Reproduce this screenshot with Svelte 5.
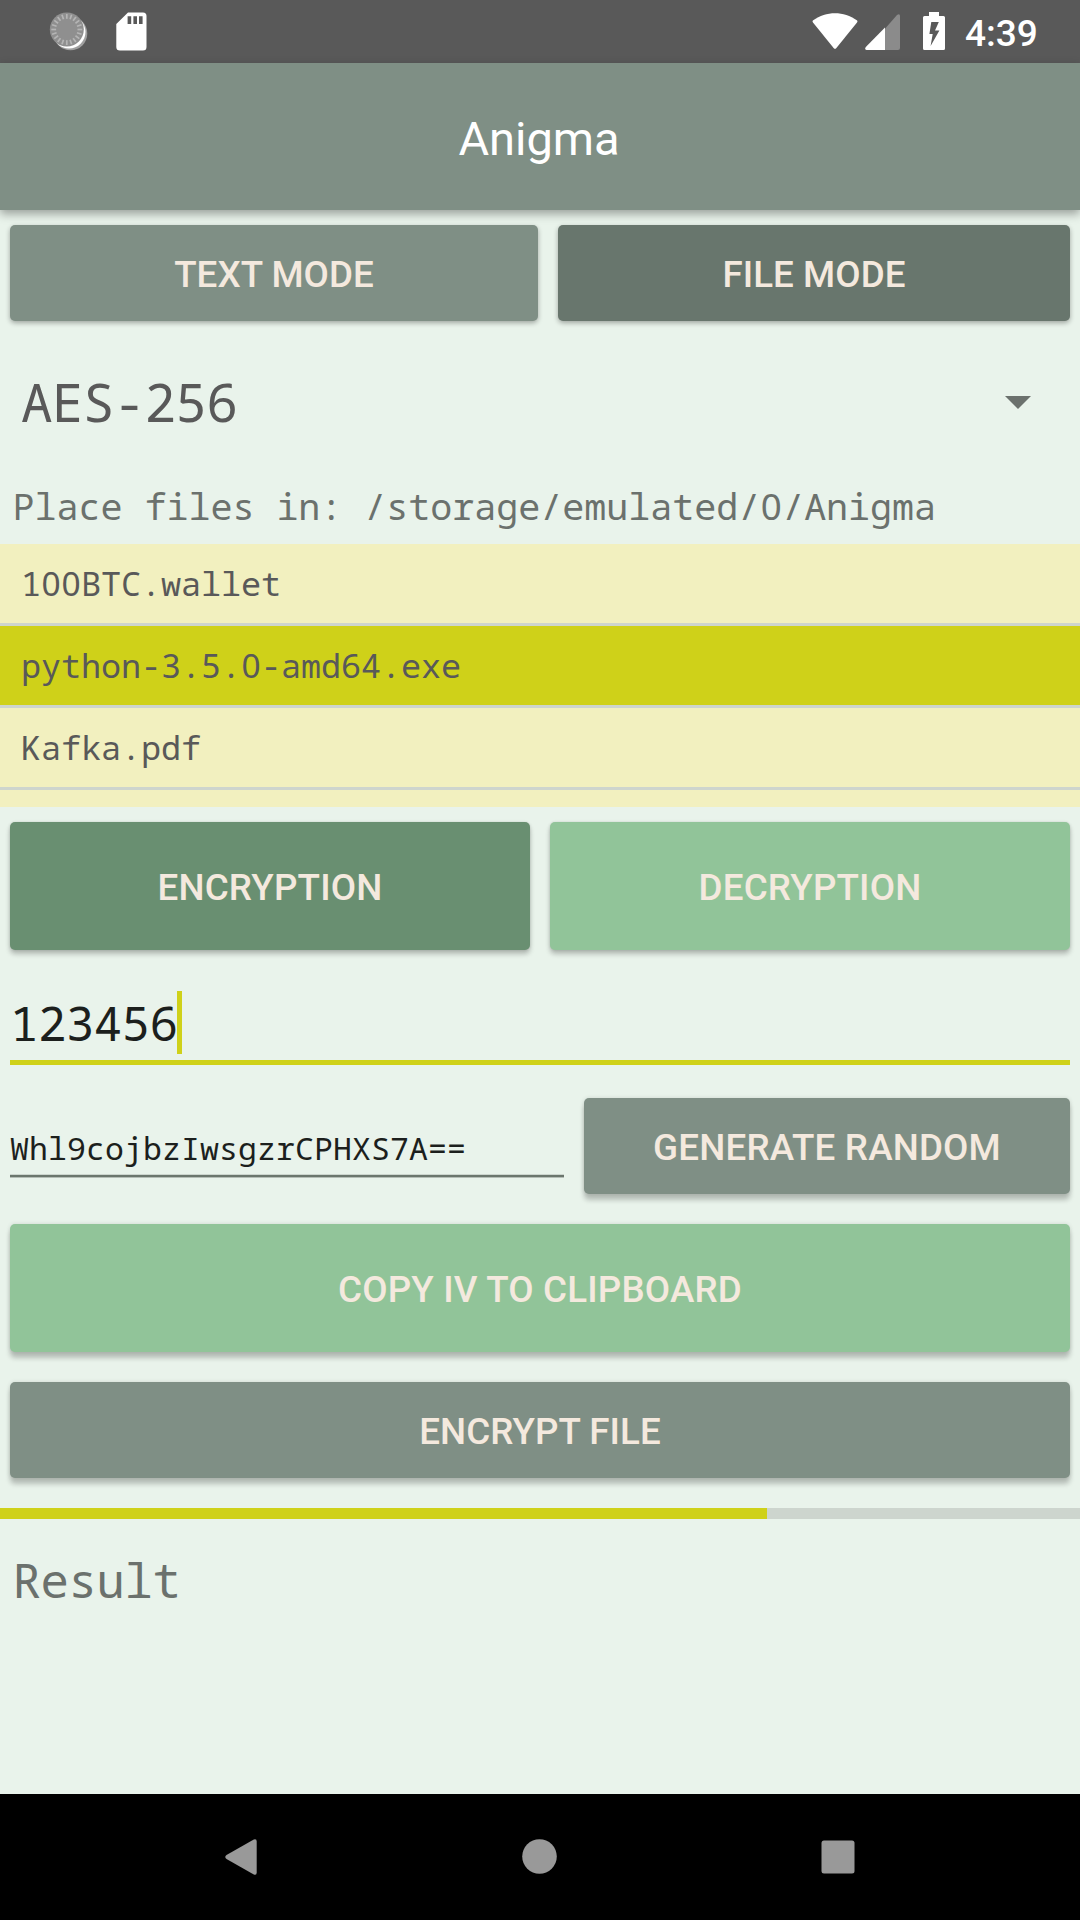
<script>
  const files = ['100BTC.wallet', 'python-3.5.0-amd64.exe', 'Kafka.pdf'];
  let selected = $state(1);
  const progress = 71;
  const ticks = Array.from({ length: 20 }, (_, i) => i * 18);
</script>

<!-- Monospaced text whose zeros are drawn without a slash -->
{#snippet plainZero(text)}{#each text.split('0') as part, i}{#if i > 0}<span class="zero">0</span>{/if}{part}{/each}{/snippet}

<div class="screen">
  <div class="status">
    <svg class="sync" width="40" height="40" viewBox="0 0 40 40">
      <circle cx="21.500" cy="21.500" r="16.800" fill="#a0a0a0" />
      <circle cx="20" cy="20" r="16.500" fill="#fff" />
      <circle cx="17.800" cy="17.500" r="17" fill="#8f8f8f" />
      {#each ticks as angle}
        <path d="M17.800 2V6.800" stroke="#b5b5b5" stroke-width="1.700" transform="rotate({angle} 17.800 17.500)" />
      {/each}
    </svg>
    <svg class="sd" width="31" height="39" viewBox="0 0 31 39">
      <path fill="#fff" fill-rule="evenodd" d="M12 .5H27Q30.5.5 30.5 4V35Q30.5 38.5 27 38.5H4Q.3 38.5.3 35V12Z M11.6 4.2V12H15.2V4.2Z M17.4 4.2V12H21V4.2Z M23 4.2V12H26.6V4.2Z" />
    </svg>
    <svg class="wifi" width="46" height="37" viewBox="0 0 46 37">
      <path fill="#fff" d="M1.2 7.2C14-2.2 32-2.2 44.8 7.2Q46 8.3 45 9.6L24.4 35Q23 36.7 21.6 35L1 9.6Q0 8.3 1.2 7.2Z" />
    </svg>
    <svg class="cell" width="35" height="36" viewBox="0 0 35 36">
      <path fill="#8b8b8b" d="M20 14.8L32 1Q35-.8 35 2V34Q35 36 33 36H20Z" />
      <path fill="#fff" d="M20 13.5V36H1.5Q-.8 35.500.8 33Z" />
    </svg>
    <svg class="battery" width="22" height="38" viewBox="0 0 22 38">
      <path fill="#fff" fill-rule="evenodd" d="M6 0H16V4H20.500Q22 4 22 5.500V36.500Q22 38 20.500 38H1.500Q0 38 0 36.500V5.500Q0 4 1.500 4H6Z M8.300 10L6.400 22H9.700L7.600 34L16.400 18.500H12L15.800 10Z" />
    </svg>
    <span class="clock">4:39</span>
  </div>

  <header>Anigma</header>

  <main>
    <div class="row modes">
      <button class="sage wide">Text mode</button>
      <button class="dark">File mode</button>
    </div>

    <div class="spinner mono">
      <span>AES-256</span>
      <svg width="26" height="13" viewBox="0 0 26 13"><path d="M0 0H26L13 13Z" fill="#6b716d" /></svg>
    </div>

    <p class="hint mono">{@render plainZero('Place files in: /storage/emulated/0/Anigma')}</p>

    <ul class="mono">
      {#each files as file, i}
        <li class:selected={i === selected}>{@render plainZero(file)}</li>
      {/each}
    </ul>

    <div class="row ops">
      <button class="forest tall">Encryption</button>
      <button class="mint tall">Decryption</button>
    </div>

    <div class="key mono"><span>123456</span><i class="caret"></i></div>

    <div class="row ivrow">
      <div class="iv mono">Whl9cojbzIwsgzrCPHXS7A==</div>
      <button class="sage low">Generate random</button>
    </div>

    <div class="row copy"><button class="mint tall low">Copy IV to clipboard</button></div>
    <div class="row run"><button class="sage low">Encrypt file</button></div>

    <div class="progress"><div class="bar" style="width: {progress}%"></div></div>

    <p class="result mono">Result</p>
  </main>

  <nav>
    <svg width="126" height="126" viewBox="0 0 126 126"><path fill="#999" d="M47.500 61L74.800 45.500Q77.700 44.500 77.700 47.500V78.500Q77.700 81.800 74.800 80.500L47.500 65Q45 63 47.500 61Z" /></svg>
    <svg width="126" height="126" viewBox="0 0 126 126"><circle cx="62.500" cy="62.500" r="17.300" fill="#999" /></svg>
    <svg width="126" height="126" viewBox="0 0 126 126"><rect x="46.500" y="46.500" width="33" height="33" rx="2.500" fill="#999" /></svg>
  </nav>
</div>

<style>
  :global(body) { margin: 0; background: #e9f3eb; }
  .screen {
    width: 1080px;
    height: 1920px;
    display: flex;
    flex-direction: column;
    overflow: hidden;
    background: #e9f3eb;
    font-family: Roboto, sans-serif;
  }
  svg { display: block; flex: none; }
  .mono { font-family: "Droid Sans Mono", "Noto Sans Mono", "DejaVu Sans Mono", monospace; white-space: pre; }
  .zero { font-family: "Noto Sans", sans-serif; line-height: 1; margin: 0 .014em; }
  .status {
    height: 63px;
    flex: none;
    display: flex;
    align-items: flex-start;
    background: #595959;
    color: #fff;
    padding-top: 12px;
    box-sizing: border-box;
  }
  .sync { margin-left: 49px; }
  .sd { margin-left: 27px; }
  .wifi { margin-left: auto; margin-top: 1px; }
  .cell { margin: 2px 0 0 7px; }
  .battery { margin-left: 23px; }
  .clock { width: 115px; margin-left: 20px; font-size: 37px; font-weight: 500; line-height: 43px; }
  header {
    height: 147px;
    flex: none;
    box-sizing: border-box;
    padding: 2px 2px 0 0;
    line-height: 147px;
    text-align: center;
    color: #fff;
    font-size: 47px;
    background: #7f8f85;
    box-shadow: 0 4px 9px rgba(0, 0, 0, .34);
    z-index: 1;
  }
  main { flex: 1; display: flex; flex-direction: column; }
  .row { display: flex; gap: 20px; padding: 0 10px; }
  .modes { padding-top: 15px; }
  button {
    flex: 1 1 0;
    min-width: 0;
    height: 96px;
    border: 0;
    margin: 0;
    padding: 2px 0 0;
    border-radius: 5px;
    color: #f4e9de;
    font: 500 36.750px Roboto, sans-serif;
    letter-spacing: .180px;
    text-transform: uppercase;
    box-shadow: 0 2px 5px rgba(0, 0, 0, .32);
  }
  .modes button, .run button { letter-spacing: .050px; }
  .wide { flex: 0 0 528px; }
  .tall { height: 128px; box-shadow: 0 4px 5px rgba(0, 0, 0, .24), 0 0 3px rgba(0, 0, 0, .12); }
  .low { box-shadow: 0 6px 5px rgba(0, 0, 0, .22), 0 0 4px rgba(0, 0, 0, .12); }
  .sage { background: #7f8f85; }
  .dark { background: #68766d; }
  .forest { background: #698f71; }
  .mint { background: #91c499; }
  .spinner {
    display: flex;
    justify-content: space-between;
    align-items: center;
    height: 163px;
    padding: 0 49.500px 0 21px;
    color: #595959;
    font-size: 52.500px;
    letter-spacing: -.600px;
  }
  .spinner span { padding-bottom: 2px; }
  p { margin: 0; }
  .hint {
    height: 60px;
    line-height: 44px;
    padding-left: 12.500px;
    font-size: 36.750px;
    letter-spacing: -.060px;
    color: #6b716d;
  }
  ul { margin: 0; padding: 0; height: 263px; overflow: hidden; list-style: none; background: #f2f0bf; }
  li {
    height: 79px;
    line-height: 79px;
    padding-left: 21px;
    border-bottom: 3px solid #ced5cd;
    font-size: 33.500px;
    letter-spacing: -.100px;
    color: #595959;
  }
  li.selected { background: #cfd119; }
  .ops { padding-top: 15px; }
  .key {
    display: flex;
    align-items: flex-end;
    height: 110px;
    margin: 0 10px;
    border-bottom: 5px solid #cfd119;
    color: #1c1f1d;
    font-size: 47.250px;
    line-height: 66px;
    letter-spacing: -.400px;
  }
  .key span { padding-bottom: 4px; }
  .caret { width: 5px; height: 63px; margin: 0 0 6px -1px; background: #cfd119; }
  .ivrow { padding-top: 33px; height: 96px; }
  .iv {
    width: 554px;
    height: 79px;
    box-sizing: border-box;
    padding-top: 25px;
    line-height: 50px;
    border-bottom: 2px solid #6b766d;
    box-shadow: inset 0 -1px #ccd5ce, 0 1px #b5beb7;
    font-size: 31.500px;
    letter-spacing: .100px;
    color: #1c1f1d;
  }
  .copy, .run { padding-top: 30px; }
  .progress { height: 11px; margin-top: 30px; background: #cdd5ce; }
  .bar { height: 100%; background: #cfd119; }
  .result {
    padding: 28px 0 0 12.500px;
    font-size: 47.250px;
    line-height: 66px;
    letter-spacing: -.350px;
    color: #6b716d;
  }
  nav {
    height: 126px;
    flex: none;
    display: flex;
    justify-content: center;
    gap: 172px;
    background: #000;
  }
</style>
